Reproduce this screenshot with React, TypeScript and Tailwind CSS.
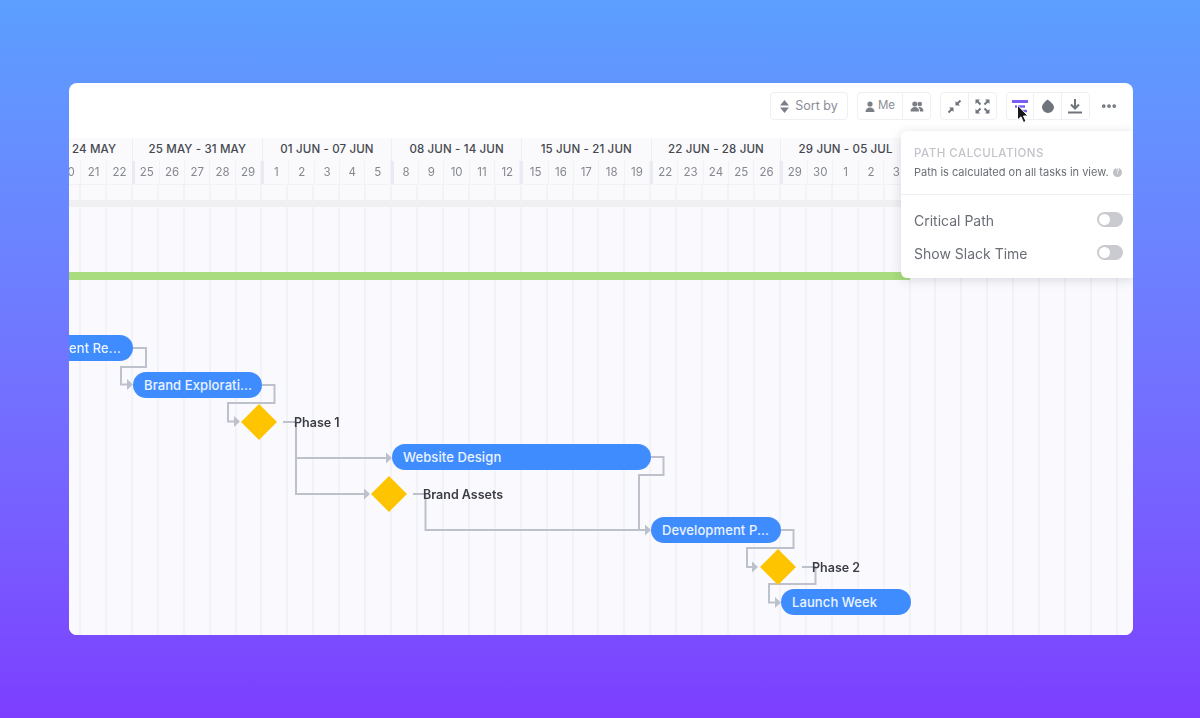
import { Ellipsis } from "lucide-react";

const weeks = [
  { label: "25 MAY - 31 MAY", days: ["25", "26", "27", "28", "29"] },
  { label: "01 JUN - 07 JUN", days: ["1", "2", "3", "4", "5"] },
  { label: "08 JUN - 14 JUN", days: ["8", "9", "10", "11", "12"] },
  { label: "15 JUN - 21 JUN", days: ["15", "16", "17", "18", "19"] },
  { label: "22 JUN - 28 JUN", days: ["22", "23", "24", "25", "26"] },
  { label: "29 JUN - 05 JUL", days: ["29", "30", "1", "2", "3"] },
];

const columns = Array.from({ length: 41 }, (_, i) => i);

function GridLines() {
  return (
    <div className="flex h-full">
      <div className="w-[12px] shrink-0 h-full border-r-2 border-[#f2f3f8]" />
      {columns.map((i) => (
        <div key={i} className="w-[25.93px] shrink-0 h-full border-r-2 border-[#f2f3f8]" />
      ))}
    </div>
  );
}

function Arrow({ x, y }: { x: number; y: number }) {
  return <polygon points={`${x},${y} ${x - 6},${y - 5.5} ${x - 6},${y + 5.5}`} fill="#bcc1cb" />;
}

function Toggle() {
  return (
    <div className="w-[26px] h-[15px] -mt-[2px] rounded-full bg-[#c9cbd0] p-[2px]">
      <div className="w-[11px] h-[11px] rounded-full bg-white" />
    </div>
  );
}

function GroupButton({ children, last }: { children: React.ReactNode; last?: boolean }) {
  return (
    <div className={"w-[27.33px] h-full flex items-center justify-center text-[#7b7f88] " + (last ? "" : "border-r border-[#eeeff3]")}>
      {children}
    </div>
  );
}

export default function App() {
  return (
    <div className="h-[718px] w-full overflow-hidden bg-gradient-to-b from-[#5b9fff] to-[#7c3dff] pt-[83px] px-[69px] font-['Inter','Liberation_Sans',sans-serif]">
      <div className="relative h-[552px] w-[1064px] rounded-lg overflow-hidden bg-white flex flex-col blur-[0.5px]">
        {/* Toolbar */}
        <div className="h-[55px] shrink-0 flex items-start justify-end gap-[9px] pr-[15px] pt-[9px]">
          <div className="h-[28px] w-[78px] rounded border border-[#eeeff3] flex items-center justify-center gap-[6px] text-[12.5px] text-[#8a8d95]">
            <svg width="9" height="13" viewBox="0 0 9 13" fill="#7b7f88">
              <polygon points="4.500,0 9,5.500 0,5.500" />
              <polygon points="0,7.500 9,7.500 4.500,13" />
            </svg>
            Sort by
          </div>
          <div className="h-[28px] rounded border border-[#eeeff3] flex">
            <div className="w-[45px] h-full flex items-center justify-center gap-[3px] text-[11.5px] text-[#8a8d95] border-r border-[#eeeff3]">
              <svg width="10" height="11" viewBox="0 0 10 11" fill="#7b7f88">
                <circle cx="5" cy="3" r="2.6" />
                <path d="M0.5 11c0-3 2-4.5 4.500-4.500s4.500 1.500 4.500 4.500z" />
              </svg>
              Me
            </div>
            <GroupButton last>
              <svg width="14" height="11" viewBox="0 0 14 11" fill="#7b7f88">
                <circle cx="4.800" cy="3" r="2.500" />
                <circle cx="9.800" cy="3" r="2.300" />
                <path d="M0.500 10.500c0-3 1.800-4.500 4.300-4.500s4.300 1.500 4.300 4.500z" />
                <path d="M10 10.500h3.500c0-3-1.500-4.500-4-4.500-0.500 0-1 0.100-1.300 0.200 1.200 0.900 1.800 2.300 1.800 4.300z" />
              </svg>
            </GroupButton>
          </div>
          <div className="h-[28px] rounded border border-[#eeeff3] flex">
            <GroupButton>
              <svg width="15" height="15" viewBox="0 0 15 15" fill="#6f737c">
                <polygon points="8.500,2 8.500,6.500 13,6.500" />
                <path d="M10 5L13.500 1.500" stroke="#6f737c" strokeWidth="2" />
                <polygon points="6.500,13 6.500,8.500 2,8.500" />
                <path d="M5 10L1.500 13.500" stroke="#6f737c" strokeWidth="2" />
              </svg>
            </GroupButton>
            <GroupButton last>
              <svg width="15" height="15" viewBox="0 0 15 15" fill="#6f737c">
                <polygon points="0.500,0.500 5,0.500 0.500,5" />
                <path d="M2 2L5.500 5.500" stroke="#6f737c" strokeWidth="2" />
                <polygon points="14.500,0.500 14.500,5 10,0.500" />
                <path d="M13 2L9.500 5.500" stroke="#6f737c" strokeWidth="2" />
                <polygon points="0.500,14.500 0.500,10 5,14.500" />
                <path d="M2 13L5.500 9.500" stroke="#6f737c" strokeWidth="2" />
                <polygon points="14.500,14.500 10,14.500 14.500,10" />
                <path d="M13 13L9.500 9.500" stroke="#6f737c" strokeWidth="2" />
              </svg>
            </GroupButton>
          </div>
          <div className="h-[28px] rounded border border-[#eeeff3] flex">
            <GroupButton>
              <svg width="16" height="13" viewBox="0 0 16 13" fill="none">
                <path d="M0 1.500H16" stroke="#7b5cf5" strokeWidth="3" />
                <path d="M3 6.500H13" stroke="#7b5cf5" strokeWidth="2.400" />
                <path d="M7 11H15" stroke="#7b5cf5" strokeWidth="2.400" />
              </svg>
            </GroupButton>
            <GroupButton>
              <svg width="12" height="14" viewBox="0 0 12 14" fill="#6f737c">
                <path d="M5.500 0.500C8 2.500 12 5 12 8.300A6 5.700 0 0 1 0 8.300C0 5 3.500 2.500 5.500 0.500z" />
              </svg>
            </GroupButton>
            <GroupButton last>
              <svg width="16" height="16" viewBox="0 0 16 16" fill="none" stroke="#6f737c" strokeWidth="2">
                <path d="M8 1V10M4 6.500L8 10.500L12 6.500" />
                <path d="M1 14.500H15" />
              </svg>
            </GroupButton>
          </div>
          <Ellipsis className="ml-[1px] mt-[5px] w-[18px] h-[18px] text-[#6f737c]" strokeWidth={3} />
        </div>

        {/* Timeline header */}
        <div className="shrink-0 flex h-[23px] bg-[#fafafc] text-[11.5px] font-medium tracking-[0.15px] text-[#45484f]">
          <div className="w-[64px] shrink-0 pl-[3px] flex items-center border-r border-[#eeeff4]">24 MAY</div>
          {weeks.map((w) => (
            <div key={w.label} className="w-[129.67px] shrink-0 flex items-center justify-center border-r border-[#eeeff4]">
              {w.label}
            </div>
          ))}
        </div>
        <div className="shrink-0 flex h-[24px] bg-[#fafafc] text-[11.5px] text-[#85888f] border-b border-[#f1f2f6]">
          <div className="w-[64px] -mr-[1.5px] shrink-0 flex justify-end overflow-hidden">
            {["20", "21", "22"].map((d) => (
              <div key={d} className="w-[25.93px] shrink-0 flex items-center justify-center border-r border-[#f1f2f6]">{d}</div>
            ))}
          </div>
          {weeks.map((w) => (
            <div key={w.label} className="w-[129.67px] shrink-0 flex border-l-[3px] border-[#e9eaf2]">
              {w.days.map((d, i) => (
                <div key={i} className="flex-1 flex items-center justify-center border-r border-[#f1f2f6]">{d}</div>
              ))}
            </div>
          ))}
        </div>
        <div className="shrink-0 h-[15px] bg-[#fafafc]">
          <GridLines />
        </div>
        <div className="shrink-0 h-[7px] bg-[#f0f0f3]" />

        {/* Chart */}
        <div className="relative flex-1 bg-[#fafafe]">
          <GridLines />

          <div className="absolute left-0 top-[65px] w-[841px] h-[8px] bg-[#a8dc7e]" />

          <svg className="absolute inset-0" width="1064" height="428" viewBox="69 207 1064 428" fill="none" stroke="#bcc1cb" strokeWidth="2">
            <path d="M133 348H146V367H121V384.500H128" />
            <path d="M262 385H274.500V403H228V421.500H235" />
            <path d="M283 422H296M296 422V494H365M296 458H386" />
            <path d="M413 494H425.500V530H646" />
            <path d="M651 457H663.500V475H639V530" />
            <path d="M781 530H793.500V548H747V567H753" />
            <path d="M802 567H815.500V584H769V602.500H776" />
            <g stroke="none">
              <Arrow x={133} y={384.5} />
              <Arrow x={240} y={421.5} />
              <Arrow x={392} y={458} />
              <Arrow x={370} y={494} />
              <Arrow x={651} y={530} />
              <Arrow x={758} y={567} />
              <Arrow x={781} y={602.5} />
            </g>
            <g stroke="none" fill="#ffc400">
              <polygon points="259,404 277,422 259,440 241,422" />
              <polygon points="389,476 407,494 389,512 371,494" />
              <polygon points="778,549 796,567 778,585 760,567" />
            </g>
          </svg>

          <div className="absolute left-0 top-[128px] w-[64px] h-[26px] pt-[1px] rounded-r-full bg-[#3f8cff] overflow-hidden flex items-center justify-end pr-[12px] text-[13px] font-medium tracking-[0.1px] text-white/90 whitespace-nowrap">
            ent Re...
          </div>
          <div className="absolute left-[64px] top-[165px] w-[129px] h-[26px] pt-[1px] rounded-full bg-[#3f8cff] flex items-center pl-[11px] text-[13px] font-medium tracking-[0.1px] text-white/90 whitespace-nowrap">
            Brand Explorati...
          </div>
          <div className="absolute left-[323px] top-[237px] w-[259px] h-[26px] pt-[1px] rounded-full bg-[#3f8cff] flex items-center pl-[11px] text-[13px] font-medium tracking-[0.1px] text-white/90 whitespace-nowrap">
            Website Design
          </div>
          <div className="absolute left-[582px] top-[310px] w-[130px] h-[26px] pt-[1px] rounded-full bg-[#3f8cff] flex items-center pl-[11px] text-[13px] font-medium tracking-[0.1px] text-white/90 whitespace-nowrap">
            Development P...
          </div>
          <div className="absolute left-[712px] top-[382px] w-[130px] h-[26px] pt-[1px] rounded-full bg-[#3f8cff] flex items-center pl-[11px] text-[13px] font-medium tracking-[0.1px] text-white/90 whitespace-nowrap">
            Launch Week
          </div>

          <div className="absolute left-[225px] top-[207px] text-[12.5px] leading-[18px] font-semibold text-[#3a3c44]">Phase 1</div>
          <div className="absolute left-[354px] top-[279px] text-[12.5px] leading-[18px] font-semibold text-[#3a3c44]">Brand Assets</div>
          <div className="absolute left-[743px] top-[352px] text-[12.5px] leading-[18px] font-semibold text-[#3a3c44]">Phase 2</div>
        </div>

        {/* Path calculations popover */}
        <div className="absolute right-0 top-[48px] w-[232px] h-[147px] rounded-l-md bg-white shadow-[0_2px_12px_rgba(40,44,60,0.16)]">
          <div className="pl-[13px] pr-[11px] pt-[15px] h-[64px] border-b border-[#eeeff2]">
            <div className="text-[11.5px] leading-[14px] font-medium tracking-[0.5px] text-[#c2c4c9]">PATH CALCULATIONS</div>
            <div className="mt-[5px] flex items-center justify-between text-[11px] leading-[14px] text-[#6a6d75]">
              Path is calculated on all tasks in view.
              <div className="w-[9px] h-[9px] rounded-full bg-[#bfc1c6] flex items-center justify-center text-[7px] text-white">?</div>
            </div>
          </div>
          <div className="flex items-center justify-between pl-[13px] pr-[10px] mt-[15px] h-[20px] text-[14px] text-[#6a6d75]">
            Critical Path
            <Toggle />
          </div>
          <div className="flex items-center justify-between pl-[13px] pr-[10px] mt-[13px] h-[20px] text-[14px] text-[#6a6d75]">
            Show Slack Time
            <Toggle />
          </div>
        </div>

        {/* Mouse cursor */}
        <svg className="absolute left-[947px] top-[21px]" width="13" height="20" viewBox="0 0 13 20">
          <path d="M1.500 1V16L5 12.800L7.500 18.500L10 17.300L7.500 12H12z" fill="#16181d" stroke="#ffffff" strokeWidth="1" />
        </svg>
      </div>
    </div>
  );
}
